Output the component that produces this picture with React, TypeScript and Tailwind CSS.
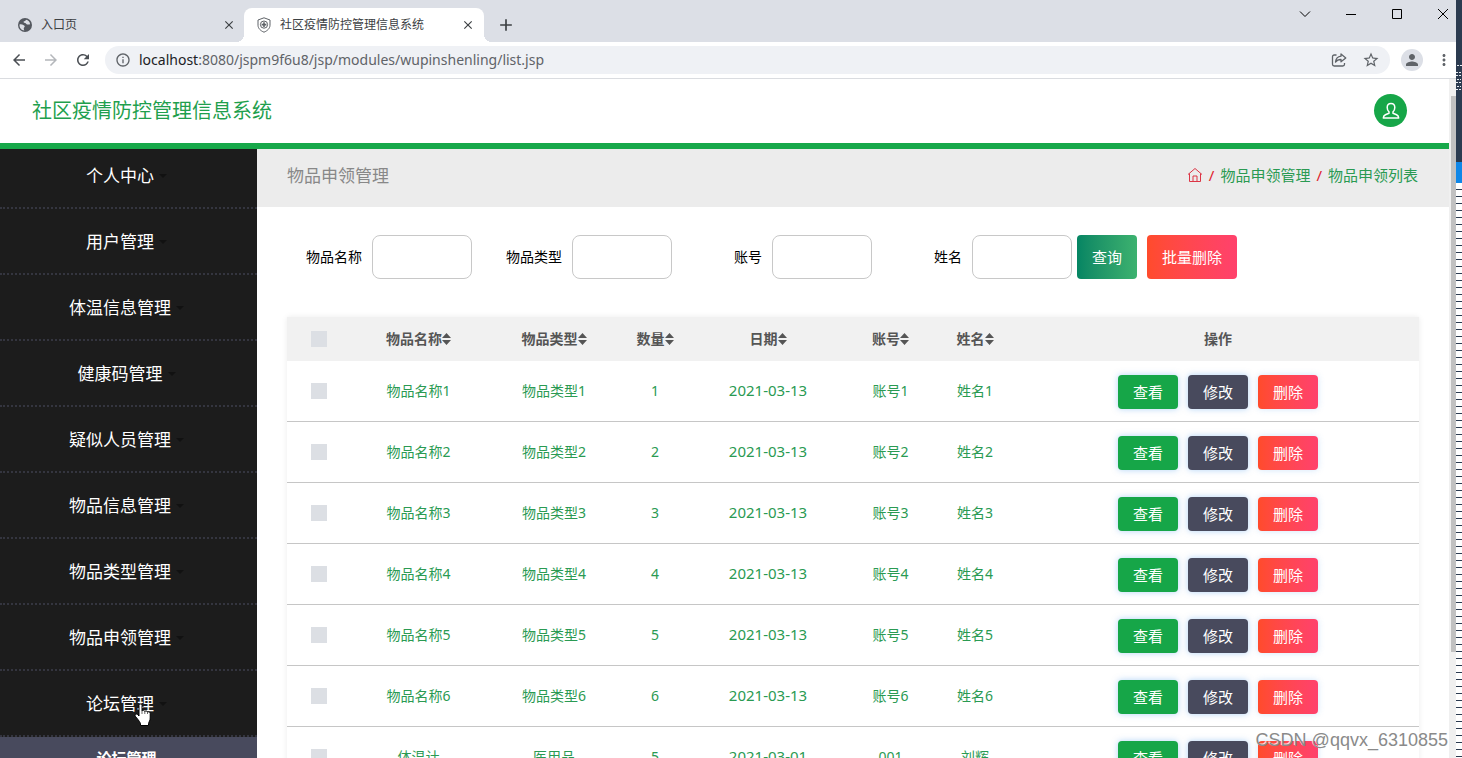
import React from "react";
import {
	MdArrowBack,
	MdArrowForward,
	MdClose,
	MdInfoOutline,
	MdMoreVert,
	MdPerson,
	MdRefresh,
	MdAdd,
	MdStarBorder,
} from "react-icons/md";

const menuItems = [
	"个人中心",
	"用户管理",
	"体温信息管理",
	"健康码管理",
	"疑似人员管理",
	"物品信息管理",
	"物品类型管理",
	"物品申领管理",
	"论坛管理",
];

const filters = [
	{ id: "wupinmingcheng", label: "物品名称" },
	{ id: "wupinleixing", label: "物品类型" },
	{ id: "zhanghao", label: "账号" },
	{ id: "xingming", label: "姓名" },
];

const columns = ["物品名称", "物品类型", "数量", "日期", "账号", "姓名"];

const rows = [
	{ name: "物品名称1", type: "物品类型1", count: 1, date: "2021-03-13", account: "账号1", user: "姓名1" },
	{ name: "物品名称2", type: "物品类型2", count: 2, date: "2021-03-13", account: "账号2", user: "姓名2" },
	{ name: "物品名称3", type: "物品类型3", count: 3, date: "2021-03-13", account: "账号3", user: "姓名3" },
	{ name: "物品名称4", type: "物品类型4", count: 4, date: "2021-03-13", account: "账号4", user: "姓名4" },
	{ name: "物品名称5", type: "物品类型5", count: 5, date: "2021-03-13", account: "账号5", user: "姓名5" },
	{ name: "物品名称6", type: "物品类型6", count: 6, date: "2021-03-13", account: "账号6", user: "姓名6" },
	{ name: "体温计", type: "医用品", count: 5, date: "2021-03-01", account: "001", user: "刘辉" },
];

function GlobeIcon() {
	return (
		<svg className="w-4 h-4" viewBox="0 0 16 16">
			<circle cx="8" cy="8" r="7" fill="#54585f" />
			<path
				d="M2.500 7.500c1.500-.6 3 .2 4.200.8 1.300.6 1.300 1.500.4 2.200-.6.500-.3 1.800.2 3C4.500 13.300 2.300 11 2.500 7.500zM9 2.700c-.3 1.200-1.600 1.200-2.300 1.900-.5.6.3 1.300 1.300 1.400 1.200.1 1.200 1.200 2.200 1.500 1 .3 2-.2 2.900-.3C12.900 4.900 11.300 3 9 2.700z"
				fill="#dcdfe6"
			/>
		</svg>
	);
}

function ShieldIcon() {
	return (
		<svg className="w-4 h-4 text-[#5f6368]" viewBox="0 0 16 16" fill="none" stroke="currentColor">
			<path d="M8 .8 14 3v5.200c0 3.200-2.600 5.600-6 7-3.400-1.400-6-3.800-6-7V3z" />
			<circle cx="8" cy="7.600" r="3.600" />
			<path d="M8 5.200v4.800M5.600 7.600h4.800" strokeWidth="1.600" />
		</svg>
	);
}

function ShareIcon() {
	return (
		<svg className="w-4 h-4 text-[#5f6368]" viewBox="0 0 16 16" fill="none" stroke="currentColor" strokeWidth="1.300" strokeLinejoin="round">
			<path d="M5.500 3H3.200C2.200 3 1.500 3.700 1.500 4.700v7.600c0 1 .7 1.700 1.700 1.700h8.600c1 0 1.700-.7 1.700-1.700V11" />
			<path d="M10 2l4.800 3.900L10 9.800V7.500c-2.600 0-4.200.7-5.500 2.600.3-3.400 2.200-5.500 5.500-5.900z" />
		</svg>
	);
}

function HomeIcon() {
	return (
		<svg className="w-4 h-4 text-[#dc3545]" viewBox="0 0 16 16" fill="none" stroke="currentColor">
			<path d="M1 7.500 8 1.500l7 6" />
			<path d="M2.500 6.500v8h11v-8" />
			<path d="M6 14.500V9h4v5.500" />
		</svg>
	);
}

function UserIcon() {
	return (
		<svg className="w-5 h-5 text-white" viewBox="0 0 20 20" fill="none" stroke="currentColor" strokeWidth="1.500" strokeLinejoin="round">
			<path d="M8 10.800C6.700 9.800 6.200 8.200 6.200 6.500 6.200 4.100 7.700 2.500 10 2.500s3.800 1.600 3.800 4c0 1.700-.5 3.300-1.800 4.300v1.400l3.600 1.500c1.300.6 2 1.500 2.100 3.300H2.300c.1-1.800.8-2.700 2.100-3.300L8 12.200z" />
		</svg>
	);
}

function SortIcon() {
	return (
		<svg className="inline-block w-[9px] h-3 align-[-1px]" viewBox="0 0 9 12" fill="currentColor">
			<path d="M4.500 0 9 5H0zM0 7h9l-4.500 5z" />
		</svg>
	);
}

function HandCursor() {
	return (
		<svg className="w-[18px] h-6" viewBox="0 0 18 24" fill="white" stroke="black">
			<path d="M5 2.500C5 .5 8 .5 8 2.500V8c.5-1 2.600-.8 2.800.5.600-1 2.500-.7 2.700.7.700-.8 2.700-.5 2.700 1.300V15c0 2.500-1.200 3.500-1.700 5.500v2H6.500v-2C5.500 18 3 15.500 1.300 13.200.300 11.800 2 10.300 3.500 11.500L5 13z" />
			<path d="M8 8v3M10.800 8.500V11M13.500 9.500V11" strokeWidth="0.600" />
		</svg>
	);
}

function TabStrip() {
	return (
		<div className="flex h-[42px] bg-[#dcdfe6] text-xs text-[#3c4043]">
			<div className="flex w-[244px] items-center pt-2 pl-[17px] pr-2">
				<GlobeIcon />
				<span className="flex-1 pl-2">入口页</span>
				<button type="button" aria-label="关闭标签页">
					<MdClose className="w-[14px] h-[14px]" />
				</button>
			</div>
			<div className="relative mt-2 flex w-60 items-center rounded-t-lg bg-white pl-3 pr-[9px]">
				{/* Curved feet of the active tab */}
				<span className="absolute bottom-0 -left-2 w-2 h-2 bg-[radial-gradient(circle_at_0_0,transparent_8px,white_8px)]" />
				<span className="absolute bottom-0 -right-2 w-2 h-2 bg-[radial-gradient(circle_at_100%_0,transparent_8px,white_8px)]" />
				<ShieldIcon />
				<span className="flex-1 pl-2">社区疫情防控管理信息系统</span>
				<button type="button" aria-label="关闭标签页">
					<MdClose className="w-[14px] h-[14px]" />
				</button>
			</div>
			<button type="button" aria-label="新标签页" className="mt-2 ml-3">
				<MdAdd className="w-5 h-5" />
			</button>
			<div className="ml-auto flex items-start gap-[34px] pt-2 pr-[7px] text-black">
				<button type="button" aria-label="搜索标签页">
					<svg className="w-3 h-3" viewBox="0 0 12 12" fill="none" stroke="currentColor">
						<path d="M1 3.500 6 8.500l5-5" />
					</svg>
				</button>
				<button type="button" aria-label="最小化">
					<svg className="w-3 h-3" viewBox="0 0 12 12" fill="none" stroke="currentColor">
						<path d="M1 6.500h10" />
					</svg>
				</button>
				<button type="button" aria-label="最大化">
					<svg className="w-3 h-3" viewBox="0 0 12 12" fill="none" stroke="currentColor">
						<path d="M1.500 1.500h9v9h-9z" />
					</svg>
				</button>
				<button type="button" aria-label="关闭">
					<svg className="w-3 h-3" viewBox="0 0 12 12" fill="none" stroke="currentColor">
						<path d="m1 1 10 10M11 1 1 11" />
					</svg>
				</button>
			</div>
		</div>
	);
}

function AddressBar() {
	return (
		<div className="flex h-[37px] items-center border-b border-[#dadce0] bg-white pl-[10px] pr-[3px] text-[#5f6368]">
			<div className="flex gap-[14px]">
				<button type="button" aria-label="后退" className="text-[#4b4f54]">
					<MdArrowBack className="w-[18px] h-[18px]" />
				</button>
				<button type="button" aria-label="前进" className="text-[#b4b7bb]">
					<MdArrowForward className="w-[18px] h-[18px]" />
				</button>
				<button type="button" aria-label="刷新" className="text-[#4b4f54]">
					<MdRefresh className="w-[18px] h-[18px]" />
				</button>
			</div>
			<div className="ml-[13px] flex h-7 flex-1 items-center rounded-full bg-[#eff1f5] px-[10px]">
				<MdInfoOutline className="w-4 h-4" />
				<div className="flex-1 pl-2 text-sm">
					<span className="text-[#202124]">localhost</span>
					:8080/jspm9f6u8/jsp/modules/wupinshenling/list.jsp
				</div>
				<button type="button" aria-label="分享">
					<ShareIcon />
				</button>
				<button type="button" aria-label="收藏" className="ml-[15px]">
					<MdStarBorder className="w-[18px] h-[18px]" />
				</button>
			</div>
			<button
				type="button"
				aria-label="用户"
				className="ml-[11px] flex w-[22px] h-[22px] items-center justify-center rounded-full bg-[#dcdfe6]"
			>
				<MdPerson className="w-[18px] h-[18px]" />
			</button>
			<button type="button" aria-label="菜单" className="ml-3">
				<MdMoreVert className="w-[18px] h-[18px]" />
			</button>
		</div>
	);
}

function Sidebar() {
	return (
		<nav className="w-[257px] shrink-0 bg-[#1c1c1c] text-[17px] leading-6 text-white">
			<ul>
				{menuItems.map((item) => (
					<li
						key={item}
						className="border-b-2 border-dotted border-[#34353f] pt-[21px] pb-[19px] first:pt-[15px]"
					>
						<a href="#" className="flex items-center justify-center">
							{item}
							<span className="ml-[5px] mr-1 border-x-4 border-t-4 border-x-transparent border-t-[#111]" />
						</a>
					</li>
				))}
			</ul>
			<ul className="bg-[#484a5d]">
				<li>
					<a href="#" className="block pt-[9px] pb-2 pr-1 text-center text-[15px] font-bold">
						论坛管理
					</a>
				</li>
			</ul>
		</nav>
	);
}

function SearchForm() {
	return (
		<form className="flex items-center pt-7 pl-[15px] text-sm text-black">
			{filters.map((filter) => (
				<div key={filter.id} className="flex items-center">
					<label htmlFor={filter.id} className="w-[100px] pr-[10px] text-right">
						{filter.label}
					</label>
					<input
						id={filter.id}
						type="text"
						className="w-[100px] h-11 rounded-lg border border-[#c8c8c8] bg-white px-2"
					/>
				</div>
			))}
			<button
				type="button"
				className="ml-[5px] h-11 rounded bg-gradient-to-r from-[#048563] to-[#3cb26f] px-[15px] pt-[2px] text-[15px] text-white"
			>
				查询
			</button>
			<button
				type="button"
				className="ml-[10px] h-11 rounded bg-gradient-to-r from-[#ff4b2b] to-[#ff416c] px-[15px] pt-[2px] text-[15px] text-white"
			>
				批量删除
			</button>
		</form>
	);
}

function RowCheckbox({ label }: { label: string }) {
	return (
		<input
			type="checkbox"
			aria-label={label}
			className="block mx-auto w-4 h-4 appearance-none bg-[#dcdfe4]"
		/>
	);
}

function ItemTable() {
	return (
		<div className="mx-[30px] mt-[38px] shadow-[0_0_6px_rgba(0,0,0,0.08)]">
			<table className="w-full table-fixed border-separate border-spacing-0 text-center text-sm">
				<colgroup>
					<col className="w-16" />
					<col className="w-[135px]" />
					<col className="w-[136px]" />
					<col className="w-[66px]" />
					<col className="w-[160px]" />
					<col className="w-[85px]" />
					<col className="w-[84px]" />
					<col />
				</colgroup>
				<thead>
					<tr className="h-11 bg-[#f1f1f1] text-[#555]">
						<th>
							<RowCheckbox label="全选" />
						</th>
						{columns.map((column) => (
							<th key={column} className="font-bold whitespace-nowrap">
								{column}
								<SortIcon />
							</th>
						))}
						<th className="font-bold">操作</th>
					</tr>
				</thead>
				<tbody>
					{rows.map((row) => (
						<tr key={row.name} className="h-[61px] text-[#2a9a52] [&>td]:border-b [&>td]:border-[#c6c6c6]">
							<td>
								<RowCheckbox label={row.name} />
							</td>
							<td>{row.name}</td>
							<td>{row.type}</td>
							<td>{row.count}</td>
							<td className="text-[15px]">{row.date}</td>
							<td>{row.account}</td>
							<td>{row.user}</td>
							<td>
								<div className="flex justify-center gap-[10px] pt-[2px] text-[15px] text-white">
									<button
										type="button"
										className="w-[60px] h-[34px] rounded bg-[#16a648] pt-[2px] shadow-[0_0_6px_rgba(100,170,240,0.5)]"
									>
										查看
									</button>
									<button
										type="button"
										className="w-[60px] h-[34px] rounded bg-[#484a5d] pt-[2px] shadow-[0_0_6px_rgba(100,170,240,0.5)]"
									>
										修改
									</button>
									<button
										type="button"
										className="w-[60px] h-[34px] rounded bg-gradient-to-r from-[#ff4b2b] to-[#ff416c] pt-[2px] shadow-[0_0_6px_rgba(100,170,240,0.3)]"
									>
										删除
									</button>
								</div>
							</td>
						</tr>
					))}
				</tbody>
			</table>
		</div>
	);
}

function App() {
	return (
		<div className="relative flex h-screen overflow-hidden bg-white font-['Noto_Sans','Noto_Sans_CJK_SC',sans-serif]">
			<div className="flex min-w-0 flex-1 flex-col">
				<TabStrip />
				<AddressBar />
				<div className="flex min-h-0 flex-1">
					<div className="min-w-0 flex-1 overflow-hidden">
						<header className="flex h-[70px] items-start justify-between border-b-6 border-[#17a84a] pt-[15px] pl-8 pr-[42px]">
							<h1 className="pt-[3px] text-xl text-[#1f9f4d]">社区疫情防控管理信息系统</h1>
							<button
								type="button"
								aria-label="个人中心"
								className="flex w-[33px] h-[33px] items-center justify-center rounded-full bg-[#16a648]"
							>
								<UserIcon />
							</button>
						</header>
						<div className="flex">
							<Sidebar />
							<main className="min-w-0 flex-1">
								<div className="flex h-[58px] items-start justify-between bg-[#ececec] pt-[14px] pl-[30px] pr-[31px] leading-6">
									<h2 className="pt-px text-[17px] text-[#888]">物品申领管理</h2>
									<div className="flex items-center gap-[6px] text-[15px] text-[#2a9a52]">
										<a href="#" aria-label="首页">
											<HomeIcon />
										</a>
										<span className="text-[#e0202c]">/</span>
										<a href="#">物品申领管理</a>
										<span className="text-[#e0202c]">/</span>
										<span>物品申领列表</span>
									</div>
								</div>
								<SearchForm />
								<ItemTable />
							</main>
						</div>
					</div>
					{/* Scrollbar */}
					<div className="w-[7px] bg-[#f0f0f0] pt-[17px] pl-[2px]">
						<div className="h-[84%] bg-[#c1c1c1]" />
					</div>
				</div>
			</div>

			{/* Editor window showing behind the browser */}
			<div className="flex w-[6px] shrink-0 flex-col bg-[#2b3b50]">
				<svg className="h-[162px] w-full" viewBox="0 0 6 162" stroke="#e8edf2" strokeDasharray="2 1">
					<path d="M1 65.500h5M0 72.500h5M0 75.500h6M1 79.500h4M0 82.500h6M1 86.500h4M0 89.500h6" />
				</svg>
				<div className="h-[21px] bg-[#0f87e8]" />
				<div className="flex-1 bg-[repeating-linear-gradient(white_0px,white_6px,#2b3b50_6px,#2b3b50_7px)]" />
			</div>

			<div className="pointer-events-none absolute top-[703px] left-[134px]">
				<HandCursor />
			</div>
			<div className="pointer-events-none absolute right-[14px] bottom-1 font-['Liberation_Sans',sans-serif] text-lg leading-7 text-[#8a8a8a] [text-shadow:-1px_-1px_0_rgba(255,255,255,0.8)]">
				CSDN @qqvx_6310855
			</div>
		</div>
	);
}

export default App;
